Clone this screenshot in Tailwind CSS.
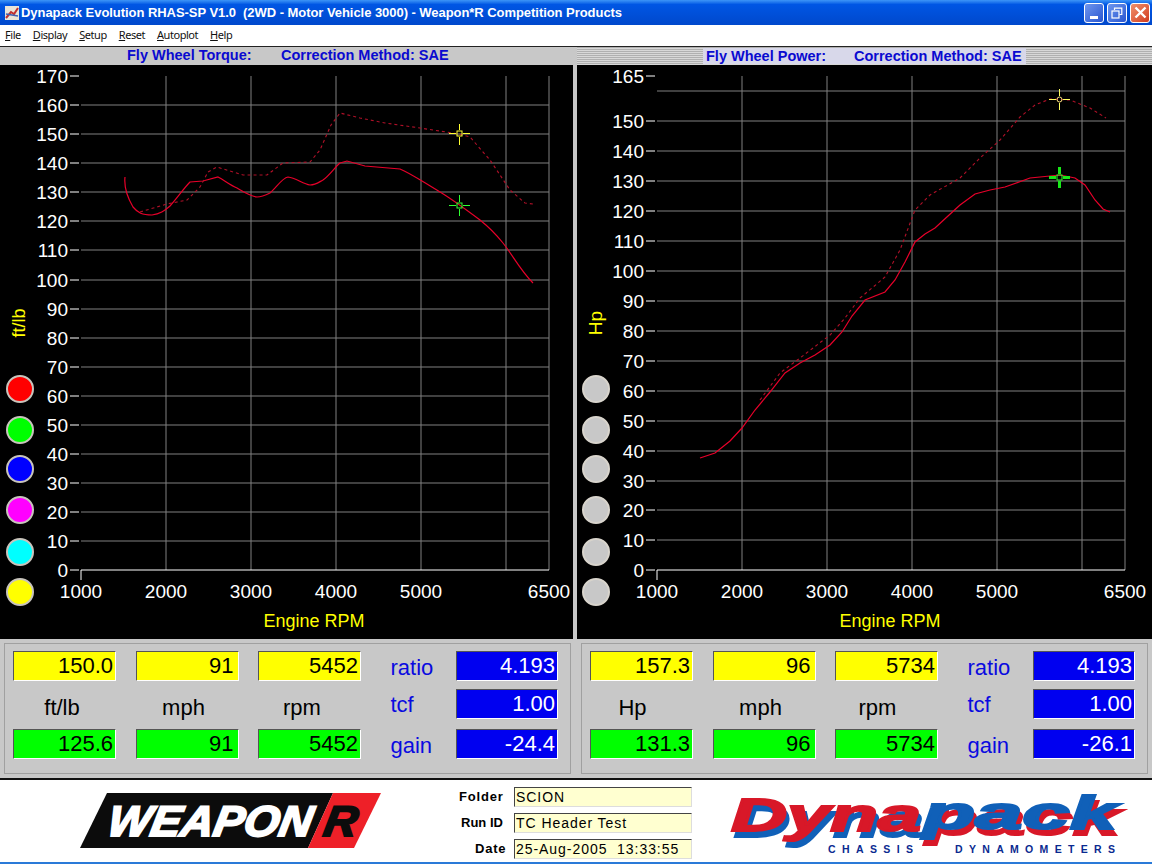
<!DOCTYPE html>
<html>
<head>
<meta charset="utf-8">
<script src="https://cdn.jsdelivr.net/npm/@tailwindcss/browser@4"></script>
</head>
<body class="m-0 bg-[#c8c8c8]">
<div class="w-[1152px] h-[864px] overflow-hidden flex flex-col font-['Liberation_Sans',Arial,sans-serif]">

  <!-- title bar -->
  <div class="h-[25px] shrink-0 flex items-center pl-[5px] pr-[2px] bg-linear-to-b from-[#3d95f7] via-[#0056e4] via-[18%] to-[#0048cc]">
    <svg class="w-[14px] h-[14px] shrink-0" viewBox="0 0 14 14"><rect width="14" height="14" fill="#e8e4d8"/><path d="M1 12 L6 6 L9 8 L13 2" stroke="#c03030" stroke-width="2" fill="none"/><path d="M1 8 L13 10" stroke="#4060b0" stroke-width="1.5"/></svg>
    <div class="ml-[2px] text-white font-bold text-[13px] leading-none whitespace-pre tracking-[-0.05px]">Dynapack Evolution RHAS-SP V1.0  (2WD - Motor Vehicle 3000) - Weapon*R Competition Products</div>
    <div class="ml-auto flex gap-[3px]">
      <div class="w-[20px] h-[20px] rounded-[3px] border border-white bg-linear-to-br from-[#6f96ee] to-[#2a55d0] flex items-end pl-[5px] pb-[3px]"><div class="w-[8px] h-[3px] bg-white"></div></div>
      <div class="w-[20px] h-[20px] rounded-[3px] border border-white bg-linear-to-br from-[#6f96ee] to-[#2a55d0] flex items-center justify-center">
        <svg class="w-[12px] h-[12px]" viewBox="0 0 12 12" fill="none" stroke="#fff"><path d="M3.500 3V1.200H10.800V7.500H8.500" stroke-width="1.200"/><rect x="1" y="4" width="7" height="7" stroke-width="1.200"/></svg>
      </div>
      <div class="w-[20px] h-[20px] rounded-[3px] border border-white bg-linear-to-br from-[#f0906c] to-[#d0381c] flex items-center justify-center">
        <svg class="w-[13px] h-[13px]" viewBox="0 0 13 13" stroke="#fff" stroke-width="2.400"><path d="M1.500 1.500L11.500 11.500M11.500 1.500L1.500 11.500"/></svg>
      </div>
    </div>
  </div>

  <!-- menu -->
  <div class="h-[21px] shrink-0 bg-white flex items-center pl-[5px] gap-[12px] text-[11px] text-[#111] font-['Noto_Sans',sans-serif] tracking-[-0.45px]">
    <span><u>F</u>ile</span><span><u>D</u>isplay</span><span><u>S</u>etup</span><span><u>R</u>eset</span><span><u>A</u>utoplot</span><span><u>H</u>elp</span>
  </div>
  <div class="h-px shrink-0 bg-[#222]"></div>

  <!-- two chart columns -->
  <div class="flex-1 min-h-0 flex gap-[4px]">

    <!-- left column -->
    <div class="w-[573px] shrink-0 flex flex-col">
      <div class="h-[18px] shrink-0 bg-[#c8c8c8] flex items-center pb-[2px] pl-[127px] text-[#0a0ad0] font-bold text-[14.5px] leading-none">
        <span class="w-[154px]">Fly Wheel Torque:</span><span>Correction Method: SAE</span>
      </div>
      <svg class="w-[573px] h-[575px] shrink-0 bg-black block" viewBox="0 65 573 575">
        <g stroke="#808080" stroke-width="1" fill="none">
          <path d="M166 76V570M251 76V570M336 76V570M421 76V570M506 76V570M549 76V570"/>
          <path d="M81 105H549M81 134H549M81 163H549M81 192H549M81 221H549M81 250H549M81 280H549M81 309H549M81 338H549M81 367H549M81 396H549M81 425H549M81 454H549M81 483H549M81 512H549M81 541H549"/>
        </g>
        <g stroke="#fff" stroke-width="1" fill="none">
          <path d="M81 570H549M81 570V580M70 76H79M70 105H79M70 134H79M70 163H79M70 192H79M70 221H79M70 250H79M70 280H79M70 309H79M70 338H79M70 367H79M70 396H79M70 425H79M70 454H79M70 483H79M70 512H79M70 541H79M70 570H79"/>
        </g>
        <g class="fill-white text-[19px]" text-anchor="end">
          <text x="68" y="83">170</text><text x="68" y="112">160</text><text x="68" y="141">150</text><text x="68" y="170">140</text><text x="68" y="199">130</text><text x="68" y="228">120</text><text x="68" y="257">110</text><text x="68" y="287">100</text><text x="68" y="316">90</text><text x="68" y="345">80</text><text x="68" y="374">70</text><text x="68" y="403">60</text><text x="68" y="432">50</text><text x="68" y="461">40</text><text x="68" y="490">30</text><text x="68" y="519">20</text><text x="68" y="548">10</text><text x="68" y="577">0</text>
        </g>
        <g class="fill-white text-[19px]" text-anchor="middle">
          <text x="81" y="598">1000</text><text x="166" y="598">2000</text><text x="251" y="598">3000</text><text x="336" y="598">4000</text><text x="421" y="598">5000</text><text x="549" y="598">6500</text>
        </g>
        <text x="314" y="627" text-anchor="middle" class="fill-[#ffff00] text-[18px]" textLength="101" lengthAdjust="spacingAndGlyphs">Engine RPM</text>
        <text transform="translate(25 323) rotate(-90)" text-anchor="middle" class="fill-[#ffff00] text-[18px]">ft/lb</text>
        <path d="M125 177C124 186 126 195 133 207C138 213 142 215 152 215C160 214 164 211 170 206C178 197 184 188 190 182L203 181L218 177C224 180 230 185 237 188C244 192 250 196 257 197C262 197 266 195 270 193C276 188 282 178 288 177C296 178 303 184 310 185C316 185 319 182 323 180C330 175 335 167 340 163L347 161L365 166L400 169C410 173 420 180 440 192C450 198 460 205 480 220C490 228 495 233 503 243C512 254 520 270 533 283" stroke="#e8002a" stroke-width="1.200" fill="none"/>
        <path d="M140 212L167 204L187 200L200 187L208 172L217 167L243 175L267 175L283 163L310 162L320 150L331 125L340 113L360 118L385 123L420 128L459 134L470 137L490 160L510 190L525 203L533 204" stroke="#b01028" stroke-width="1.100" stroke-dasharray="3 3" fill="none"/>
        <g fill="none" stroke="#ffff30" stroke-width="1"><path d="M449 133.500H456M463 133.500H470M459.500 124V130M459.500 137V145"/><rect x="457" y="131" width="5" height="5"/></g>
        <g fill="none" stroke="#30ff30" stroke-width="1"><path d="M449 205.500H456M463 205.500H470M459.500 195V202M459.500 209V216"/><rect x="457" y="203" width="5" height="5"/></g>
        <g stroke="#c8c4bc" stroke-width="2">
          <circle cx="20" cy="389" r="13" fill="#ff0000"/><circle cx="20" cy="430" r="13" fill="#00ff00"/><circle cx="20" cy="469" r="13" fill="#0000ff"/><circle cx="20" cy="510" r="13" fill="#ff00ff"/><circle cx="20" cy="552" r="13" fill="#00ffff"/><circle cx="20" cy="592" r="13" fill="#ffff00"/>
        </g>
      </svg>
    </div>

    <!-- right column -->
    <div class="w-[575px] shrink-0 flex flex-col">
      <div class="h-[18px] shrink-0 flex items-center text-[#0a0ad0] font-bold text-[14.5px] leading-none bg-[repeating-linear-gradient(to_bottom,#b0b0b0_0,#b0b0b0_1px,#d8d8d8_1px,#d8d8d8_2px)]">
        <div class="w-[126px]"></div>
        <div class="w-[323px] h-[16px] bg-[#d8d8ea] flex items-center pl-[3px]"><span class="w-[148px]">Fly Wheel Power:</span><span>Correction Method: SAE</span></div>
      </div>
      <svg class="w-[575px] h-[575px] shrink-0 bg-black block" viewBox="577 65 575 575">
        <g stroke="#808080" stroke-width="1" fill="none">
          <path d="M742 76V570M827 76V570M912 76V570M997 76V570M1082 76V570M1125 76V570"/>
          <path d="M657 91H1125M657 121H1125M657 151H1125M657 181H1125M657 211H1125M657 241H1125M657 271H1125M657 301H1125M657 331H1125M657 361H1125M657 391H1125M657 421H1125M657 451H1125M657 481H1125M657 510H1125M657 540H1125"/>
        </g>
        <g stroke="#fff" stroke-width="1" fill="none">
          <path d="M657 570H1125M657 570V580M646 76H655M646 121H655M646 151H655M646 181H655M646 211H655M646 241H655M646 271H655M646 301H655M646 331H655M646 361H655M646 391H655M646 421H655M646 451H655M646 481H655M646 510H655M646 540H655M646 570H655"/>
        </g>
        <g class="fill-white text-[19px]" text-anchor="end">
          <text x="644" y="83">165</text><text x="644" y="128">150</text><text x="644" y="158">140</text><text x="644" y="188">130</text><text x="644" y="218">120</text><text x="644" y="248">110</text><text x="644" y="278">100</text><text x="644" y="308">90</text><text x="644" y="338">80</text><text x="644" y="368">70</text><text x="644" y="398">60</text><text x="644" y="428">50</text><text x="644" y="458">40</text><text x="644" y="488">30</text><text x="644" y="517">20</text><text x="644" y="547">10</text><text x="644" y="577">0</text>
        </g>
        <g class="fill-white text-[19px]" text-anchor="middle">
          <text x="657" y="598">1000</text><text x="742" y="598">2000</text><text x="827" y="598">3000</text><text x="912" y="598">4000</text><text x="997" y="598">5000</text><text x="1125" y="598">6500</text>
        </g>
        <text x="890" y="627" text-anchor="middle" class="fill-[#ffff00] text-[18px]" textLength="101" lengthAdjust="spacingAndGlyphs">Engine RPM</text>
        <text transform="translate(602 323) rotate(-90)" text-anchor="middle" class="fill-[#ffff00] text-[19px]">Hp</text>
        <path d="M700 458L715 453L730 441L742 428L755 410L770 392L785 373L800 363L815 355L830 345L842 332L852 316L865 300L885 292L895 280L905 262L915 242L925 234L935 228L948 216L960 205L975 194L990 190L1005 187L1030 178L1060 175L1075 178L1085 185L1095 200L1103 209L1110 212" stroke="#e8002a" stroke-width="1.200" fill="none"/>
        <path d="M760 400L780 373L800 358L830 335L845 318L860 298L872 288L885 277L900 250L915 210L930 195L960 178L980 158L1000 140L1020 117L1035 105L1050 99L1070 100L1090 108L1106 118" stroke="#b01028" stroke-width="1.100" stroke-dasharray="3 3" fill="none"/>
        <g fill="none" stroke="#ffff60" stroke-width="1"><path d="M1049 99.500H1056M1063 99.500H1070M1059.500 89V96M1059.500 103V110"/></g>
        <circle cx="1059.500" cy="99.500" r="2.500" fill="none" stroke="#ffe080"/>
        <g fill="none" stroke="#18e818" stroke-width="3"><path d="M1049 177.500H1056M1063 177.500H1070M1059.500 167V174M1059.500 181V188"/></g>
        <rect x="1057" y="175" width="5" height="5" fill="none" stroke="#30ff30"/>
        <g stroke="#d8d4cc" stroke-width="2" fill="#c8c8c8">
          <circle cx="596" cy="389" r="13"/><circle cx="596" cy="430" r="13"/><circle cx="596" cy="469" r="13"/><circle cx="596" cy="510" r="13"/><circle cx="596" cy="552" r="13"/><circle cx="596" cy="592" r="13"/>
        </g>
      </svg>
    </div>
  </div>

  <!-- data panels -->
  <div class="h-[139px] shrink-0 bg-[#c8c8c8] flex gap-[4px] pt-[4px] pb-[4px] text-[22px] leading-none">
    <!-- left -->
    <div class="w-[573px] shrink-0 pl-[4px] pr-[2px]">
      <div class="h-full border border-[#a0a0a0] pl-[8px] pt-[7px] grid grid-cols-[103px_103px_103px_56px_102px] grid-rows-[30px_32px_30px] gap-x-[19.500px] gap-y-[8px]">
        <div class="bg-[#ffff00] flex items-center justify-end pr-[2px] border border-t-[#555] border-l-[#555] border-r-white border-b-white">150.0</div>
        <div class="bg-[#ffff00] flex items-center justify-end pr-[4px] border border-t-[#555] border-l-[#555] border-r-white border-b-white">91</div>
        <div class="bg-[#ffff00] flex items-center justify-end pr-[2px] border border-t-[#555] border-l-[#555] border-r-white border-b-white">5452</div>
        <div class="text-[#0a0ae0] flex items-center pl-[10px] pt-[3px]">ratio</div>
        <div class="bg-[#0000f0] text-white flex items-center justify-end pr-[2px] border border-t-[#555] border-l-[#555] border-r-white border-b-white">4.193</div>

        <div class="flex items-center justify-center pr-[5px] pt-[5px]">ft/lb</div>
        <div class="flex items-center justify-center pr-[7px] pt-[5px]">mph</div>
        <div class="flex items-center justify-center pr-[15px] pt-[5px]">rpm</div>
        <div class="text-[#0a0ae0] flex items-center pl-[10px]">tcf</div>
        <div class="mb-[2px] bg-[#0000f0] text-white flex items-center justify-end pr-[2px] border border-t-[#555] border-l-[#555] border-r-white border-b-white">1.00</div>

        <div class="bg-[#00ff00] flex items-center justify-end pr-[2px] border border-t-[#555] border-l-[#555] border-r-white border-b-white">125.6</div>
        <div class="bg-[#00ff00] flex items-center justify-end pr-[4px] border border-t-[#555] border-l-[#555] border-r-white border-b-white">91</div>
        <div class="bg-[#00ff00] flex items-center justify-end pr-[2px] border border-t-[#555] border-l-[#555] border-r-white border-b-white">5452</div>
        <div class="text-[#0a0ae0] flex items-center pl-[10px] pt-[3px]">gain</div>
        <div class="bg-[#0000f0] text-white flex items-center justify-end pr-[2px] border border-t-[#555] border-l-[#555] border-r-white border-b-white">-24.4</div>
      </div>
    </div>
    <!-- right -->
    <div class="w-[575px] shrink-0 pl-[4px] pr-[4px]">
      <div class="h-full border border-[#a0a0a0] pl-[8px] pt-[7px] grid grid-cols-[103px_103px_103px_56px_102px] grid-rows-[30px_32px_30px] gap-x-[19.500px] gap-y-[8px]">
        <div class="bg-[#ffff00] flex items-center justify-end pr-[2px] border border-t-[#555] border-l-[#555] border-r-white border-b-white">157.3</div>
        <div class="bg-[#ffff00] flex items-center justify-end pr-[4px] border border-t-[#555] border-l-[#555] border-r-white border-b-white">96</div>
        <div class="bg-[#ffff00] flex items-center justify-end pr-[2px] border border-t-[#555] border-l-[#555] border-r-white border-b-white">5734</div>
        <div class="text-[#0a0ae0] flex items-center pl-[10px] pt-[3px]">ratio</div>
        <div class="bg-[#0000f0] text-white flex items-center justify-end pr-[2px] border border-t-[#555] border-l-[#555] border-r-white border-b-white">4.193</div>

        <div class="flex items-center justify-center pr-[18px] pt-[5px]">Hp</div>
        <div class="flex items-center justify-center pr-[7px] pt-[5px]">mph</div>
        <div class="flex items-center justify-center pr-[18px] pt-[5px]">rpm</div>
        <div class="text-[#0a0ae0] flex items-center pl-[10px]">tcf</div>
        <div class="mb-[2px] bg-[#0000f0] text-white flex items-center justify-end pr-[2px] border border-t-[#555] border-l-[#555] border-r-white border-b-white">1.00</div>

        <div class="bg-[#00ff00] flex items-center justify-end pr-[2px] border border-t-[#555] border-l-[#555] border-r-white border-b-white">131.3</div>
        <div class="bg-[#00ff00] flex items-center justify-end pr-[4px] border border-t-[#555] border-l-[#555] border-r-white border-b-white">96</div>
        <div class="bg-[#00ff00] flex items-center justify-end pr-[2px] border border-t-[#555] border-l-[#555] border-r-white border-b-white">5734</div>
        <div class="text-[#0a0ae0] flex items-center pl-[10px] pt-[3px]">gain</div>
        <div class="bg-[#0000f0] text-white flex items-center justify-end pr-[2px] border border-t-[#555] border-l-[#555] border-r-white border-b-white">-26.1</div>
      </div>
    </div>
  </div>
  <div class="h-[2px] shrink-0 bg-[#111]"></div>

  <!-- footer -->
  <div class="h-[82px] shrink-0 bg-white flex">
    <svg class="w-[440px] h-[82px] shrink-0" viewBox="0 780 440 82">
      <polygon points="107,793 333,793 308,848 80,848" fill="#0c0c0c"/>
      <polygon points="333,793 381,793 354,848 308,848" fill="#ee2028"/>
      <text transform="translate(106 836) skewX(-10)" textLength="204" lengthAdjust="spacingAndGlyphs" class="fill-white text-[43px] font-bold italic" stroke="#fff" stroke-width="2">WEAPON</text>
      <text transform="translate(322 836) skewX(-10)" textLength="33" lengthAdjust="spacingAndGlyphs" class="fill-[#0c0c0c] text-[43px] font-bold italic" stroke="#0c0c0c" stroke-width="2">R</text>
    </svg>
    <div class="w-[252px] shrink-0 pt-[7px] flex flex-col gap-[6px] text-[13px] tracking-[0.8px]">
      <div class="h-[20px] flex items-center"><span class="w-[64px] pl-[19px] font-bold">Folder</span><div class="ml-[10px] w-[178px] h-full bg-[#ffffd0] border border-t-[#444] border-l-[#444] border-r-[#ddd] border-b-[#ddd] pl-[1px] leading-[18px] text-[14px] tracking-[0.95px]">SCION</div></div>
      <div class="h-[20px] flex items-center"><span class="w-[72px] pl-[21px] font-bold tracking-normal">Run ID</span><div class="ml-[2px] w-[178px] h-full bg-[#ffffd0] border border-t-[#444] border-l-[#444] border-r-[#ddd] border-b-[#ddd] pl-[1px] leading-[18px] text-[14px] tracking-[0.95px]">TC Header Test</div></div>
      <div class="h-[20px] flex items-center"><span class="w-[72px] pl-[35px] font-bold">Date</span><div class="ml-[2px] w-[178px] h-full bg-[#ffffd0] border border-t-[#444] border-l-[#444] border-r-[#ddd] border-b-[#ddd] pl-[1px] leading-[18px] text-[14px] tracking-[0.95px] whitespace-pre">25-Aug-2005  13:33:55</div></div>
    </div>
    <svg class="w-[460px] h-[82px] shrink-0" viewBox="692 780 460 82">
      <g class="text-[47px] font-bold italic">
        <text x="731" y="831" textLength="190" lengthAdjust="spacingAndGlyphs" class="fill-[#d81828] [filter:drop-shadow(3px_6px_0_#1060b8)]" stroke="#d81828" stroke-width="2">Dyna</text>
        <text x="923" y="829" textLength="194" lengthAdjust="spacingAndGlyphs" class="fill-[#1060b8] [filter:drop-shadow(3px_6px_0_#d81828)]" stroke="#1060b8" stroke-width="2">pack</text>
      </g>
      <text x="828" y="853" textLength="85" class="fill-[#0a2a90] text-[10.5px] font-bold">CHASSIS</text>
      <text x="955" y="853" textLength="160" class="fill-[#0a2a90] text-[10.5px] font-bold">DYNAMOMETERS</text>
    </svg>
  </div>
  <div class="h-[2px] shrink-0 bg-[#2a7ad8]"></div>
</div>
</body>
</html>
